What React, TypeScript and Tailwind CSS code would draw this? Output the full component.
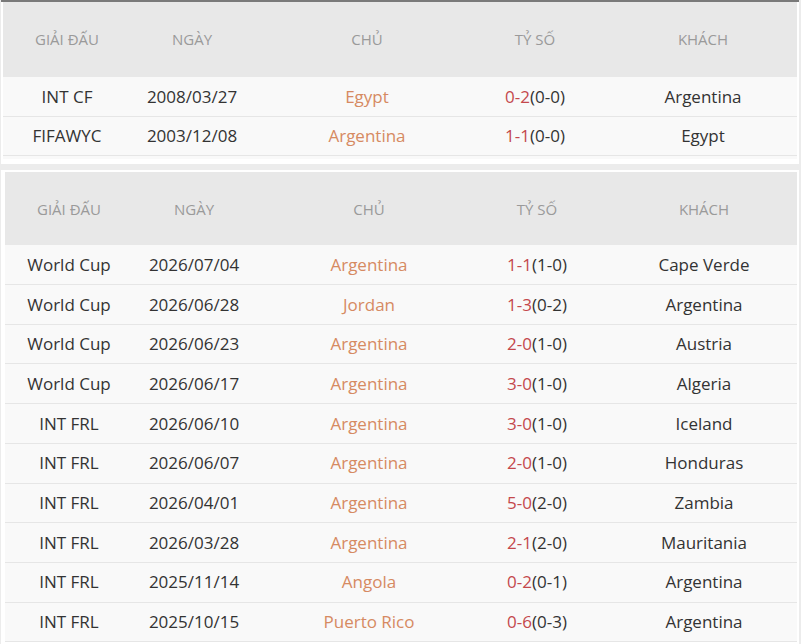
import React from 'react';

type Match = {
  league: string;
  date: string;
  home: string;
  score: string;
  half: string;
  away: string;
};

const h2h: Match[] = [
  { league: 'INT CF', date: '2008/03/27', home: 'Egypt', score: '0-2', half: '(0-0)', away: 'Argentina' },
  { league: 'FIFAWYC', date: '2003/12/08', home: 'Argentina', score: '1-1', half: '(0-0)', away: 'Egypt' },
];

const recent: Match[] = [
  { league: 'World Cup', date: '2026/07/04', home: 'Argentina', score: '1-1', half: '(1-0)', away: 'Cape Verde' },
  { league: 'World Cup', date: '2026/06/28', home: 'Jordan', score: '1-3', half: '(0-2)', away: 'Argentina' },
  { league: 'World Cup', date: '2026/06/23', home: 'Argentina', score: '2-0', half: '(1-0)', away: 'Austria' },
  { league: 'World Cup', date: '2026/06/17', home: 'Argentina', score: '3-0', half: '(1-0)', away: 'Algeria' },
  { league: 'INT FRL', date: '2026/06/10', home: 'Argentina', score: '3-0', half: '(1-0)', away: 'Iceland' },
  { league: 'INT FRL', date: '2026/06/07', home: 'Argentina', score: '2-0', half: '(1-0)', away: 'Honduras' },
  { league: 'INT FRL', date: '2026/04/01', home: 'Argentina', score: '5-0', half: '(2-0)', away: 'Zambia' },
  { league: 'INT FRL', date: '2026/03/28', home: 'Argentina', score: '2-1', half: '(2-0)', away: 'Mauritania' },
  { league: 'INT FRL', date: '2025/11/14', home: 'Angola', score: '0-2', half: '(0-1)', away: 'Argentina' },
  { league: 'INT FRL', date: '2025/10/15', home: 'Puerto Rico', score: '0-6', half: '(0-3)', away: 'Argentina' },
];

const cols = 'grid grid-cols-[128px_122px_228px_108px_1fr]';

function Header({ tall }: { tall?: boolean }) {
  return (
    <div className={`${cols} ${tall ? 'h-[75px]' : 'h-[73px]'} items-center bg-[#e8e8e8] text-[15px] text-[#9a9a9a]`}>
      <div className="text-center">GIẢI ĐẤU</div>
      <div className="text-center">NGÀY</div>
      <div className="text-center">CHỦ</div>
      <div className="text-center">TỶ SỐ</div>
      <div className="text-center pl-5">KHÁCH</div>
    </div>
  );
}

function Row({ m }: { m: Match }) {
  return (
    <div className={`${cols} h-[39.7px] items-center border-b border-[#e6e6e6] text-[17px] text-[#333]`}>
      <div className="text-center">{m.league}</div>
      <div className="text-center">{m.date}</div>
      <div className="text-center text-[#d68a62]">{m.home}</div>
      <div className="text-center">
        <span className="text-[#c4484c]">{m.score}</span>
        {m.half}
      </div>
      <div className="text-center pl-5">{m.away}</div>
    </div>
  );
}

export default function App() {
  return (
    <div
      className="w-[801px] h-[644px] overflow-hidden bg-[#ececec] flex flex-col gap-[6px]"
      style={{ fontFamily: '"Open Sans", "Noto Sans", sans-serif' }}
    >
      {/* Đối đầu */}
      <div className="border-t-2 border-[#7a7a7a] bg-white ml-[1px] mr-[2px] px-[2px] pb-[5px]">
        <Header tall />
        <div className="bg-[#f9f9f9]">
          {h2h.map((m) => (
            <Row key={m.date} m={m} />
          ))}
          <div className="h-[3px]" />
        </div>
      </div>

      {/* Phong độ gần đây */}
      <div className="bg-white ml-[1px] mr-[2px] pl-[4px] pr-[2px] pt-[2px] pb-[4px]">
        <Header />
        <div className="bg-[#f9f9f9]">
          {recent.map((m) => (
            <Row key={m.date} m={m} />
          ))}
        </div>
      </div>
    </div>
  );
}
